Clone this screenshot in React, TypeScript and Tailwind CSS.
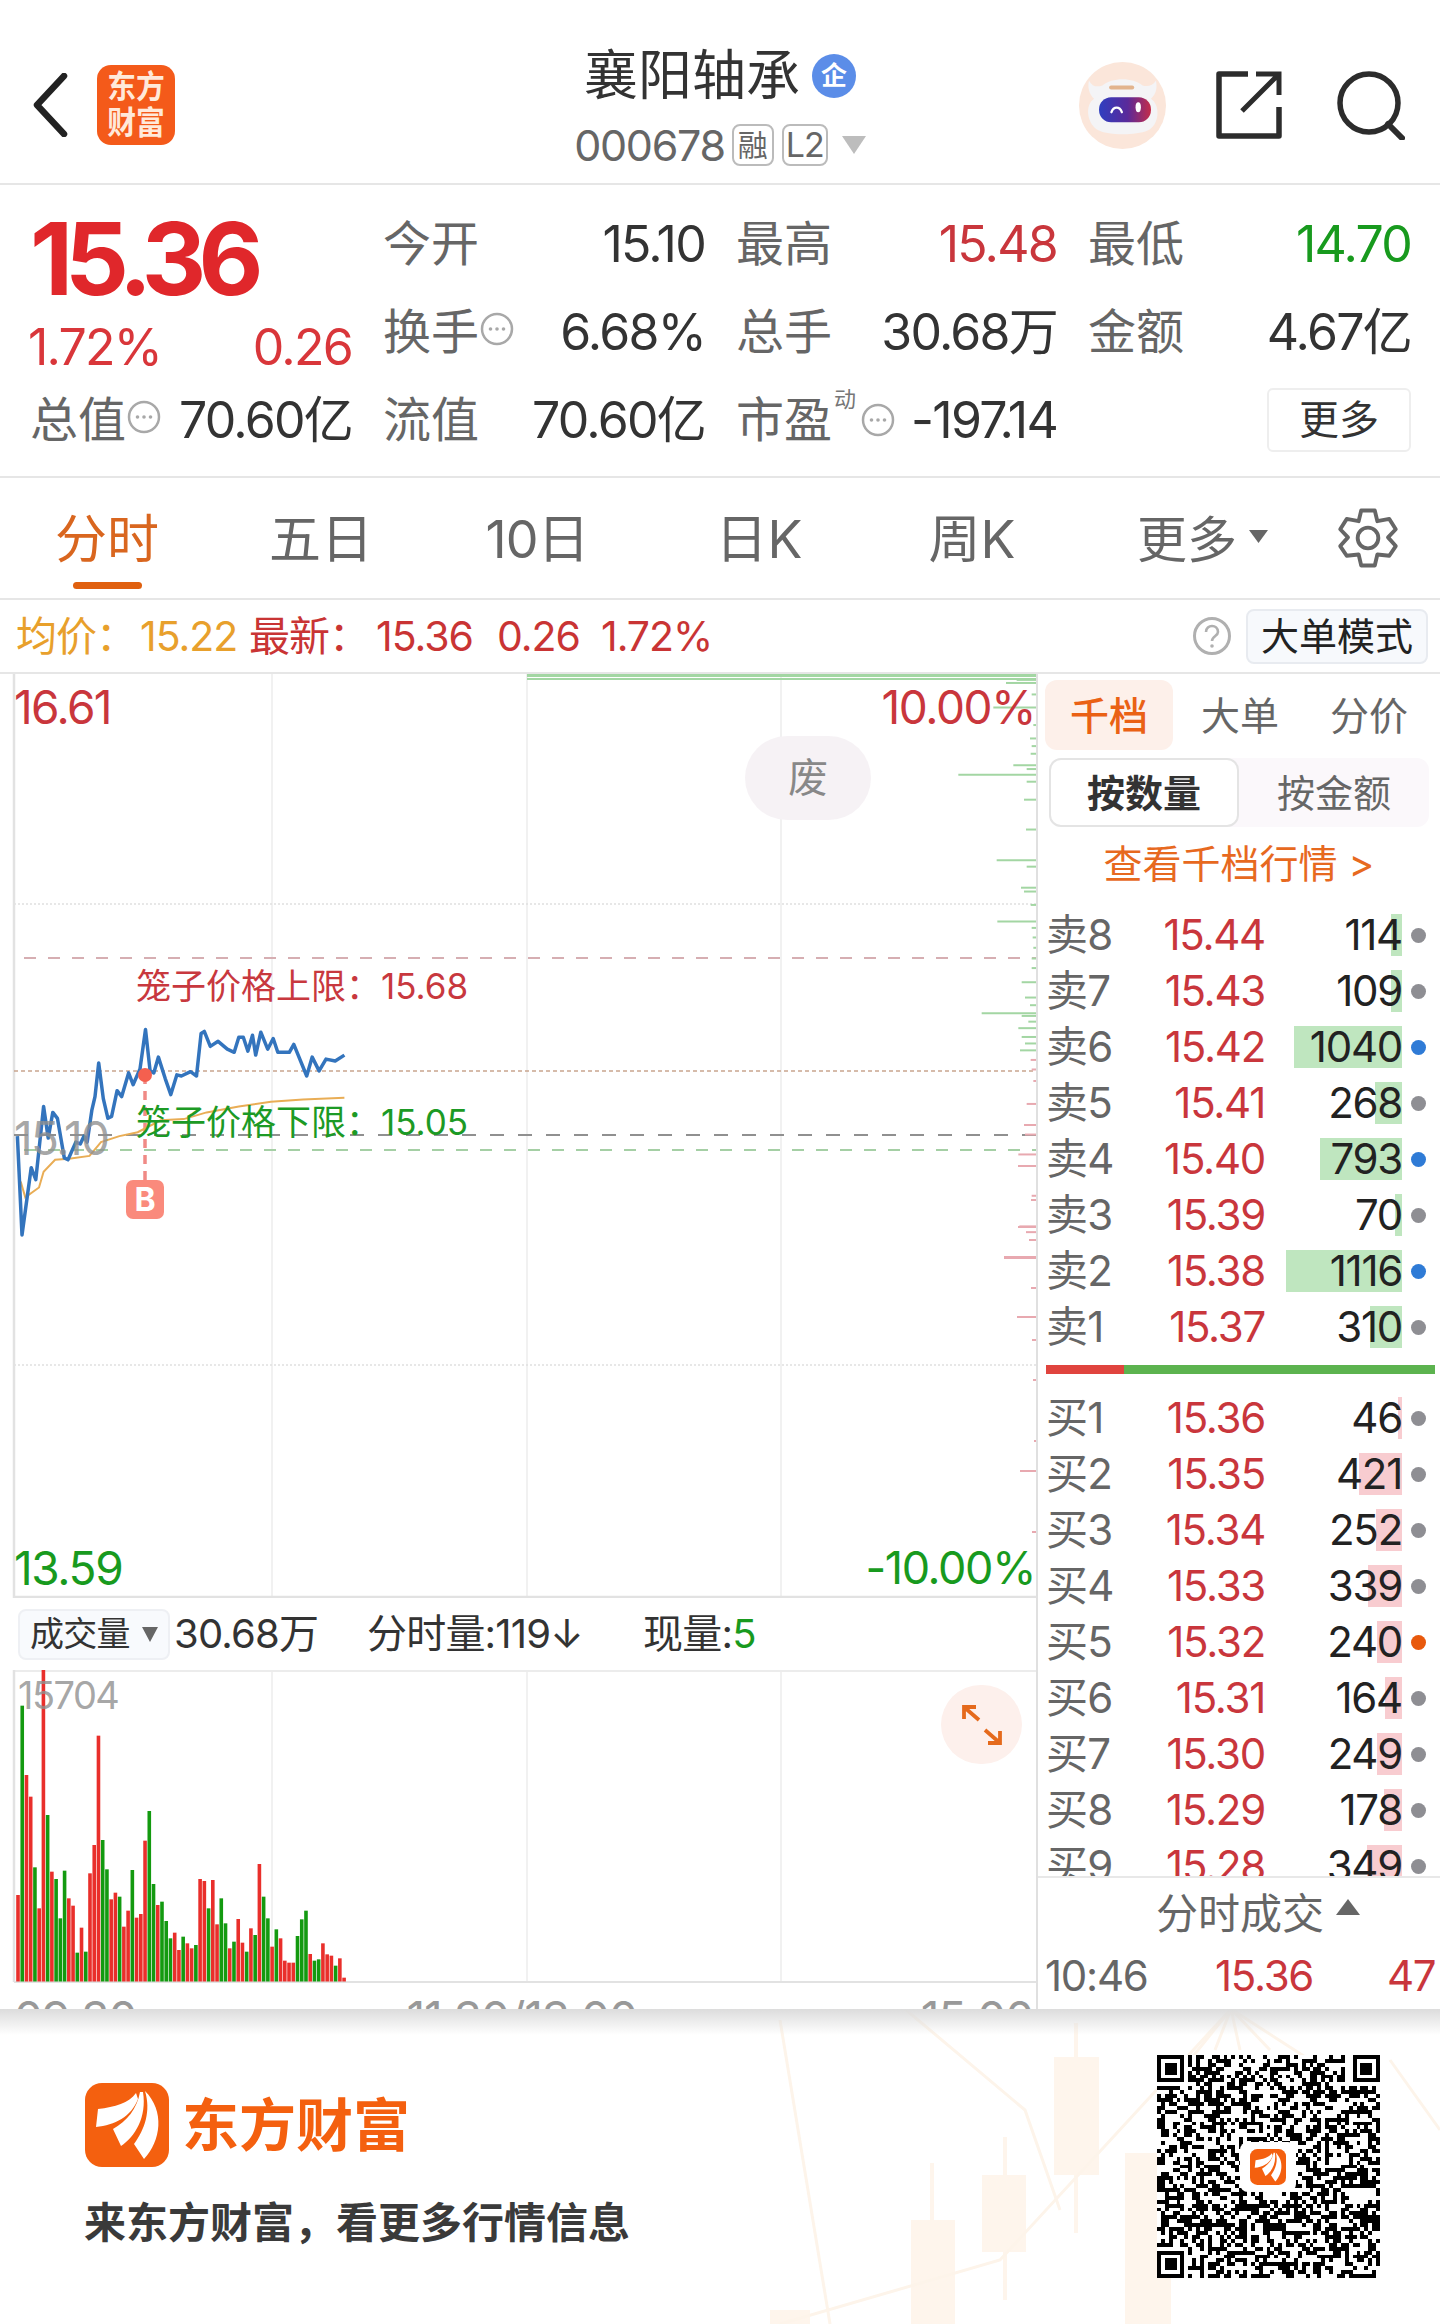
import React from "react";

const toPts = (a: number[][], sx: number, ox: number, sy: number, oy: number) =>
  a.map(([x, y]) => `${(x / sx + ox).toFixed(1)},${(y / sy + oy).toFixed(1)}`).join(" ");

const blue = [[38,395],[48,645],[68,475],[78,505],[95,320],[105,400],[115,335],[125,350],[140,450],[148,455],[165,410],[175,415],[183,395],[190,410],[200,330],[207,295],[215,210],[225,300],[235,350],[243,345],[255,280],[265,295],[280,235],[290,265],[305,225],[317,125],[327,230],[335,235],[345,195],[360,250],[372,290],[385,240],[395,243],[415,232],[428,243],[438,135],[445,130],[458,168],[475,155],[495,175],[510,183],[520,145],[530,145],[540,180],[550,140],[557,190],[568,132],[583,175],[595,148],[605,183],[630,183],[640,163],[668,243],[680,195],[695,230],[710,200],[730,205],[750,190]];
const avg = [[45,510],[55,550],[85,525],[95,485],[120,455],[150,452],[195,445],[220,410],[260,395],[300,385],[350,355],[400,352],[450,335],[520,320],[590,308],[660,302],[750,298]];

const greenDepth = [[52,350],[60,318],[90,395],[124,280],[170,400],[205,390],[225,395],[245,392],[275,340],[285,380],[300,175],[318,380],[365,372],[443,378],[523,290],[540,380],[595,363],[605,372],[640,392],[683,292],[700,395],[725,398],[752,400],[780,395],[805,395],[842,365],[882,375],[902,390],[923,245],[930,365],[945,385],[962,355],[985,365],[1002,375],[1020,360]];
const redDepth = [[1045,392],[1070,395],[1100,400],[1160,380],[1215,372],[1240,375],[1292,355],[1400,395],[1480,358],[1495,378],[1560,312]];
const redDepth2 = [[1166,19],[1227,19],[1258,33],[1288,6],[1317,20],[1380,4],[1441,3],[1471,17],[1532,5],[1340,5],[1200,6],[1240,8]];

const vol: [number, string][] = [[705,"r"],[137,"g"],[345,"r"],[410,"r"],[622,"g"],[745,"r"],[30,"r"],[465,"g"],[635,"r"],[657,"g"],[775,"g"],[632,"g"],[715,"r"],[737,"r"],[878,"g"],[803,"r"],[875,"g"],[640,"r"],[555,"r"],[227,"r"],[540,"g"],[628,"g"],[718,"r"],[698,"r"],[710,"g"],[800,"r"],[752,"r"],[630,"g"],[773,"r"],[762,"r"],[542,"r"],[453,"g"],[672,"g"],[735,"r"],[725,"g"],[783,"g"],[835,"g"],[818,"r"],[870,"r"],[830,"g"],[850,"r"],[865,"r"],[855,"g"],[657,"r"],[663,"r"],[745,"g"],[660,"r"],[793,"r"],[715,"g"],[790,"g"],[865,"r"],[845,"g"],[777,"r"],[848,"r"],[875,"g"],[805,"r"],[825,"g"],[612,"r"],[710,"g"],[775,"g"],[860,"r"],[808,"g"],[835,"r"],[902,"r"],[908,"r"],[908,"r"],[828,"g"],[778,"g"],[752,"g"],[882,"r"],[902,"g"],[898,"g"],[850,"r"],[883,"r"],[887,"r"],[917,"g"],[895,"r"],[953,"r"]];

const sells: [string, string, string, number, string][] = [
  ["卖8","15.44","114",11,"#8e8e93"],["卖7","15.43","109",11,"#8e8e93"],["卖6","15.42","1040",108,"#2f7bd6"],["卖5","15.41","268",27,"#8e8e93"],
  ["卖4","15.40","793",82,"#2f7bd6"],["卖3","15.39","70",7,"#8e8e93"],["卖2","15.38","1116",116,"#2f7bd6"],["卖1","15.37","310",32,"#8e8e93"],
];
const buys: [string, string, string, number, string][] = [
  ["买1","15.36","46",4,"#8e8e93"],["买2","15.35","421",43,"#8e8e93"],["买3","15.34","252",26,"#8e8e93"],["买4","15.33","339",34,"#8e8e93"],
  ["买5","15.32","240",25,"#e8590c"],["买6","15.31","164",17,"#8e8e93"],["买7","15.30","249",25,"#8e8e93"],["买8","15.29","178",18,"#8e8e93"],["买9","15.28","349",35,"#8e8e93"],
];

function qrPath() {
  const n = 57;
  let s = 12345;
  const rnd = () => {
    s = (s * 1103515245 + 12345) & 0x7fffffff;
    return (s >> 16) & 1;
  };
  let d = "";
  const finder = (r: number, c: number) => r < 8 && c < 8;
  for (let r = 0; r < n; r++) {
    for (let c = 0; c < n; c++) {
      const on = rnd();
      if (finder(r, c) || finder(r, n - 1 - c) || finder(n - 1 - r, c)) continue;
      if (on) d += `M${c} ${r}h1v1h-1z`;
    }
  }
  const f = (x: number, y: number) => {
    d += `M${x} ${y}h7v7h-7zM${x + 1} ${y + 1}v5h5v-5zM${x + 2} ${y + 2}h3v3h-3z`;
  };
  f(0, 0);
  f(n - 7, 0);
  f(0, n - 7);
  return d;
}
const QR = qrPath();

function DotCircle() {
  return (
    <svg width="34" height="34" viewBox="0 0 34 34" className="shrink-0">
      <circle cx="17" cy="17" r="15" fill="none" stroke="#a8a8a8" strokeWidth="2.5" />
      <circle cx="10.5" cy="17" r="1.8" fill="#a8a8a8" />
      <circle cx="17" cy="17" r="1.8" fill="#a8a8a8" />
      <circle cx="23.5" cy="17" r="1.8" fill="#a8a8a8" />
    </svg>
  );
}

function Feather({ w, h }: { w: number; h: number }) {
  return (
    <svg width={w} height={h} viewBox="0 0 84 84" className="block">
      <rect width="84" height="84" rx="17" fill="#f4600f" />
      <path d="M51 10 C44 20 30 24 13 26 L11 44 C30 42 46 34 53 16Z" fill="#fff" />
      <path d="M55 9 C52 26 42 38 28 46 L36 63 C50 54 62 34 58 9Z" fill="#fff" />
      <path d="M60 8 C66 28 60 46 49 61 L59 76 C76 58 80 28 60 8Z" fill="#fff" />
    </svg>
  );
}

function BookRow({ r, green }: { r: [string, string, string, number, string]; green: boolean }) {
  return (
    <div className="flex h-[56px] shrink-0 items-center">
      <div className="w-[80px] text-[42px] leading-none tracking-[-0.02em] text-[#666]">{r[0]}</div>
      <div className="w-[139px] text-right text-[42px] leading-none tracking-[-0.03em] text-[#c9363c]">{r[1]}</div>
      <div className="relative flex h-[42px] w-[137px] items-center justify-end">
        <div className={green ? "absolute right-0 top-0 h-full bg-[#bfe6bf]" : "absolute right-0 top-0 h-full bg-[#f8ccd0]"} style={{ width: r[3] }} />
        <span className="relative text-[42px] leading-none tracking-[-0.03em] text-[#222]">{r[2]}</span>
      </div>
      <div className="ml-[9px] h-[15px] w-[15px] rounded-full" style={{ background: r[4] }} />
    </div>
  );
}

export default function App() {
  return (
    <div className="flex h-[2324px] w-[1440px] flex-col overflow-hidden bg-white font-['Inter','Noto_Sans_CJK_SC',sans-serif] text-[#333]">
      {/* Header */}
      <div className="flex h-[183px] shrink-0 items-stretch">
        <div className="flex w-[361px] items-center pl-[32px] pt-[27px]">
          <svg width="36" height="64" viewBox="0 0 36 64">
            <path d="M32 3 L5 32 L32 61" fill="none" stroke="#222" strokeWidth="6.5" strokeLinecap="round" strokeLinejoin="round" />
          </svg>
          <div className="ml-[29px] flex h-[80px] w-[78px] flex-col items-center justify-center rounded-[14px] bg-[#f45a1a] text-[32px] font-bold leading-[36px] text-[#ffe9da]">
            <span className="scale-x-90">东方</span>
            <span className="scale-x-90">财富</span>
          </div>
        </div>
        <div className="flex flex-1 flex-col items-center pt-[46px]">
          <div className="flex h-[60px] items-center">
            <span className="text-[54px] leading-none text-[#333]">襄阳轴承</span>
            <span className="ml-[12px] flex h-[44px] w-[44px] items-center justify-center rounded-full bg-[#5b8de8] text-[26px] font-bold leading-none text-white">企</span>
          </div>
          <div className="mt-[18px] flex h-[42px] items-center">
            <span className="text-[43px] leading-none tracking-[-0.03em] text-[#666]">000678</span>
            <span className="ml-[7px] flex h-[42px] w-[42px] items-center justify-center rounded-[8px] border-2 border-[#bbb] text-[30px] leading-none text-[#666]">融</span>
            <span className="ml-[8px] flex h-[42px] w-[46px] items-center justify-center rounded-[8px] border-2 border-[#bbb] text-[34px] leading-none tracking-[-0.03em] text-[#666]">L2</span>
            <svg width="24" height="18" viewBox="0 0 24 18" className="ml-[14px]">
              <path d="M0 0H24L12 18Z" fill="#bdbdbd" />
            </svg>
          </div>
        </div>
        <div className="flex w-[361px] items-center justify-end pr-[35px] pt-[27px]">
          <svg width="87" height="87" viewBox="0 0 260 260">
            <defs>
              <linearGradient id="visor" x1="0" y1="0" x2="1" y2="0">
                <stop offset="0" stopColor="#2f3fc0" />
                <stop offset="0.55" stopColor="#5a2a9a" />
                <stop offset="1" stopColor="#c42c4a" />
              </linearGradient>
            </defs>
            <circle cx="130" cy="130" r="130" fill="#fbe6da" />
            <path d="M30 55 C40 75 55 75 70 70 C100 45 160 45 190 70 C205 75 222 70 230 55 C236 85 225 100 215 110 C245 130 240 190 205 205 C170 220 90 220 60 205 C25 190 15 130 45 110 C30 95 25 75 30 55Z" fill="#f4f4f6" />
            <rect x="90" y="70" width="75" height="12" rx="6" fill="#e2b48e" />
            <rect x="60" y="105" width="155" height="75" rx="36" fill="url(#visor)" />
            <path d="M97 150 C103 132 122 132 128 150" fill="none" stroke="#fff" strokeWidth="7" strokeLinecap="round" />
            <ellipse cx="177" cy="135" rx="8" ry="15" fill="#fff" />
          </svg>
          <svg width="66" height="68" viewBox="0 0 66 68" className="ml-[50px]">
            <path d="M32 3 H3 V65 H63 V36" fill="none" stroke="#2c2c2c" strokeWidth="5.5" strokeLinejoin="round" />
            <path d="M26 40 L62 4 M40 3 H63 V24" fill="none" stroke="#2c2c2c" strokeWidth="5" />
          </svg>
          <svg width="69" height="70" viewBox="0 0 69 70" className="ml-[54px]">
            <circle cx="33" cy="33" r="29" fill="none" stroke="#2c2c2c" strokeWidth="5.5" />
            <path d="M52 54 L66 68" stroke="#2c2c2c" strokeWidth="6" strokeLinecap="round" />
          </svg>
        </div>
      </div>

      {/* Quote */}
      <div className="grid h-[295px] shrink-0 grid-cols-[322px_322px_321px_323px] grid-rows-[88px_88px_88px] gap-x-[31px] border-y-2 border-[#e6e6e6] pl-[30px] pt-[15px]">
        <div className="row-span-2 flex flex-col">
          <div className="flex h-[114px] items-center pt-[4px] text-[100px] font-bold leading-none tracking-[-0.08em] text-[#e0272b]">15.36</div>
          <div className="mt-[6px] flex h-[54px] items-center justify-between text-[50px] leading-none tracking-[-0.035em] text-[#d9363a]">
            <span className="-ml-[2px]">1.72%</span>
            <span>0.26</span>
          </div>
        </div>
        <Cell label="今开" value="15.10" />
        <Cell label="最高" value="15.48" color="text-[#c9363c]" />
        <Cell label="最低" value="14.70" color="text-[#189a1e]" />
        <Cell label="换手" value="6.68%" icon />
        <Cell label="总手" value="30.68万" />
        <Cell label="金额" value="4.67亿" />
        <Cell label="总值" value="70.60亿" icon />
        <Cell label="流值" value="70.60亿" />
        <div className="flex items-center justify-between">
          <div className="flex items-center">
            <span className="text-[48px] leading-none text-[#666]">市盈</span>
            <span className="mb-[42px] ml-[2px] w-[22px] text-[22px] leading-none text-[#777]">动</span>
            <span className="ml-[5px]"><DotCircle /></span>
          </div>
          <span className="text-[50px] leading-none tracking-[-0.035em] text-[#333]">-197.14</span>
        </div>
        <div className="flex items-center justify-end">
          <div className="flex h-[64px] w-[144px] items-center justify-center rounded-[6px] border-2 border-[#eee] text-[40px] leading-none text-[#333]">更多</div>
        </div>
      </div>

      {/* Tabs */}
      <div className="flex h-[122px] shrink-0 items-center border-b-2 border-[#e6e6e6]">
        <div className="relative flex h-full w-[214px] items-center justify-center pt-[4px] text-[52px] leading-none text-[#d9661f]">
          分时
          <div className="absolute bottom-[9px] left-[73px] h-[7px] w-[69px] rounded-full bg-[#e0600f]" />
        </div>
        <div className="flex h-full w-[214px] items-center justify-center pt-[4px] text-[52px] leading-none text-[#666]">五日</div>
        <div className="flex h-full w-[218px] items-center justify-center pt-[4px] text-[52px] leading-none tracking-[-0.02em] text-[#666]">10日</div>
        <div className="flex h-full w-[226px] items-center justify-center pt-[4px] text-[52px] leading-none text-[#666]">日K</div>
        <div className="flex h-full w-[200px] items-center justify-center pt-[4px] text-[52px] leading-none text-[#666]">周K</div>
        <div className="ml-[65px] flex items-center pt-[4px] text-[50px] leading-none text-[#666]">
          更多
          <svg width="19" height="13" viewBox="0 0 19 13" className="mb-[8px] ml-[12px]"><path d="M0 0H19L9.5 13Z" fill="#666" /></svg>
        </div>
        <svg width="62" height="62" viewBox="50 32 192 190" className="ml-[69px]" fill="none" stroke="#666" strokeWidth="12" strokeLinejoin="round">
          <path d="M125 42 H167 L175 75 L212 68 L232 100 L208 125 L232 152 L212 182 L175 178 L167 212 H125 L117 178 L80 182 L60 152 L84 125 L60 100 L80 68 L117 75 Z" />
          <circle cx="146" cy="127" r="32" />
        </svg>
      </div>

      {/* Info bar */}
      <div className="flex h-[74px] shrink-0 items-center justify-between border-b-2 border-[#e6e6e6] pl-[16px] pr-[12px] text-[41px] leading-none tracking-[-0.025em]">
        <div className="flex items-center">
          <span className="w-[124px] text-[#e8a02c]">均价：</span>
          <span className="w-[109px] text-[#e8a02c]">15.22</span>
          <span className="w-[127px] text-[#c93434]">最新：</span>
          <span className="w-[121px] text-[#c93434]">15.36</span>
          <span className="w-[104px] text-[#c93434]">0.26</span>
          <span className="text-[#c93434]">1.72%</span>
        </div>
        <div className="flex items-center">
          <svg width="40" height="40" viewBox="0 0 40 40" className="block">
            <circle cx="20" cy="20" r="17.5" fill="none" stroke="#b0b0b0" strokeWidth="3" />
            <path d="M14 16 C14 8 26 8 26 16 C26 20 20 20 20 25" fill="none" stroke="#b0b0b0" strokeWidth="2.6" />
            <circle cx="20" cy="30" r="1.8" fill="#b0b0b0" />
          </svg>
          <div className="ml-[14px] flex h-[55px] w-[182px] items-center justify-center rounded-[8px] border-2 border-[#e8ebf0] bg-[#f7f9fc] text-[38px] tracking-normal text-[#222]">大单模式</div>
        </div>
      </div>

      {/* Main */}
      <div className="flex h-[1335px] shrink-0">
        <div className="flex h-full w-[1038px] shrink-0 flex-col border-r-2 border-[#e0e0e0]">
          <div className="relative h-[924px] shrink-0">
            <svg className="absolute inset-0" width="1036" height="924" viewBox="0 674 1036 924">
              <g stroke="#ededed" strokeWidth="1.5">
                <line x1="272" y1="674" x2="272" y2="1596" />
                <line x1="527" y1="674" x2="527" y2="1596" />
                <line x1="781" y1="674" x2="781" y2="1596" />
              </g>
              <g stroke="#e0e0e0" strokeWidth="1.5" strokeDasharray="2 2">
                <line x1="14" y1="904" x2="1036" y2="904" />
                <line x1="14" y1="1365" x2="1036" y2="1365" />
              </g>
              <line x1="14" y1="672" x2="14" y2="1598" stroke="#e2e2e2" strokeWidth="2.5" />
              <line x1="14" y1="1597" x2="1036" y2="1597" stroke="#e2e2e2" strokeWidth="2.5" />
              <line x1="24" y1="958" x2="1036" y2="958" stroke="#d6aeb2" strokeWidth="2" strokeDasharray="12 12" />
              <line x1="14" y1="1071" x2="1036" y2="1071" stroke="#c9a58f" strokeWidth="1.5" strokeDasharray="4 3" />
              <line x1="14" y1="1135" x2="1036" y2="1135" stroke="#909090" strokeWidth="2" strokeDasharray="14 14" />
              <line x1="24" y1="1150" x2="1036" y2="1150" stroke="#a5cfa5" strokeWidth="2" strokeDasharray="12 12" />
              <g stroke="#a3d6a3" strokeWidth="2">
                <line x1="527" y1="675" x2="1036" y2="675" strokeWidth="4" />
                <line x1="527" y1="679" x2="1036" y2="679" />
                {greenDepth.map(([y, x], i) => (
                  <line key={i} x1={900 + x / 3} y1={660 + y / 2.613} x2="1036" y2={660 + y / 2.613} />
                ))}
              </g>
              <g stroke="#e8a9b0" strokeWidth="2">
                {redDepth.map(([y, x], i) => (
                  <line key={i} x1={900 + x / 3} y1={660 + y / 2.613} x2="1036" y2={660 + y / 2.613} />
                ))}
                {redDepth2.map(([y, w], i) => (
                  <line key={i} x1={1037 - w} y1={y} x2="1036" y2={y} />
                ))}
              </g>
              <line x1="145" y1="1075" x2="145" y2="1180" stroke="#f08a86" strokeWidth="3.5" strokeDasharray="9 7" />
              <polyline points={toPts(avg, 2.178, 0, 2.53, 980)} fill="none" stroke="#e9ad55" strokeWidth="2" />
              <polyline points={toPts(blue, 2.178, 0, 2.53, 980)} fill="none" stroke="#3374bd" strokeWidth="3.5" strokeLinejoin="round" />
              <circle cx="145" cy="1075" r="7" fill="#f4604f" />
            </svg>
            <span className="absolute left-[14px] top-[12px] text-[46px] leading-[42px] tracking-[-0.035em] text-[#c9363c]">16.61</span>
            <span className="absolute right-[1px] top-[12px] text-[46px] leading-[42px] tracking-[-0.03em] text-[#c9363c]">10.00%</span>
            <div className="absolute left-[745px] top-[62px] flex h-[84px] w-[126px] items-center justify-center rounded-full bg-[#f5f1f4]/95 text-[40px] leading-none text-[#888]">废</div>
            <span className="absolute left-[136px] top-[294px] text-[35px] leading-[36px] text-[#c8383e]">笼子价格上限：15.68</span>
            <span className="absolute left-[136px] top-[430px] text-[35px] leading-[36px] text-[#1c9a25]">笼子价格下限：15.05</span>
            <span className="absolute left-[14px] top-[443px] text-[46px] leading-[42px] tracking-[-0.035em] text-[#8f8f8f]/80">15.10</span>
            <div className="absolute left-[126px] top-[506px] flex h-[39px] w-[38px] items-center justify-center rounded-[7px] bg-[#fa8a7c] text-[32px] font-bold leading-none text-white">B</div>
            <span className="absolute left-[14px] top-[873px] text-[46px] leading-[42px] tracking-[-0.03em] text-[#189a1e]">13.59</span>
            <span className="absolute right-[1px] top-[873px] text-[45px] leading-[42px] tracking-[-0.03em] text-[#189a1e]">-10.00%</span>
          </div>
          <div className="flex h-[72px] shrink-0 items-center pl-[18px] text-[40px] leading-none tracking-[-0.02em] text-[#333]">
            <div className="flex h-[51px] w-[152px] items-center rounded-[8px] border-2 border-[#eef0f4] bg-[#f8fafd] pl-[10px] text-[34px] leading-none">
              成交量
              <svg width="16" height="15" viewBox="0 0 16 15" className="ml-[12px]"><path d="M0 0H16L8 15Z" fill="#666" /></svg>
            </div>
            <span className="ml-[4px] w-[193px]">30.68万</span>
            <span className="w-[216px]">分时量:119↓</span>
            <span className="ml-[60px]">现量:</span>
            <span className="text-[#189a1e]">5</span>
          </div>
          <div className="relative h-[313px] shrink-0">
            <svg className="absolute inset-0" width="1036" height="313" viewBox="0 1670 1036 313">
              <g stroke="#ededed" strokeWidth="1.5">
                <line x1="272" y1="1670" x2="272" y2="1982" />
                <line x1="527" y1="1670" x2="527" y2="1982" />
                <line x1="781" y1="1670" x2="781" y2="1982" />
              </g>
              <line x1="14" y1="1671" x2="1036" y2="1671" stroke="#ececec" strokeWidth="2" />
              <line x1="14" y1="1670" x2="14" y2="1982" stroke="#e2e2e2" strokeWidth="2.5" />
              <line x1="14" y1="1982" x2="1036" y2="1982" stroke="#e2e2e2" strokeWidth="2" />
              {vol.map(([t, c], i) => {
                const y = 1660 + t / 3;
                return <rect key={i} x={16.2 + i * 4.235} y={y} width="3.6" height={1981.5 - y} fill={c === "r" ? "#e92f2b" : "#139a10"} />;
              })}
            </svg>
            <span className="absolute left-[18px] top-[6px] text-[38px] leading-[38px] tracking-[-0.04em] text-[#8f8f8f]/80">15704</span>
            <div className="absolute left-[941px] top-[15px] flex h-[79px] w-[81px] items-center justify-center rounded-full bg-[#fdf0ec]">
              <svg width="40" height="40" viewBox="0 0 40 40" fill="none" stroke="#e56a1c" strokeWidth="3.8">
                <path d="M2 14 V2 H14 M2 2 L17 15" />
                <path d="M38 26 V38 H26 M38 38 L23 25" />
              </svg>
            </div>
          </div>
          <div className="relative flex h-[26px] shrink-0 justify-between overflow-hidden pl-[14px] pr-[3px] pt-[12px] text-[46px] leading-[46px] tracking-[-0.025em] text-[#999]">
            <span>09:30</span>
            <span className="ml-[-14px]">11:30/13:00</span>
            <span>15:00</span>
          </div>
        </div>

        <div className="flex h-full flex-1 flex-col">
          <div className="flex h-[76px] shrink-0 items-center pl-[7px] pt-[6px] text-[39px] leading-none text-[#666]">
            <div className="flex h-[70px] w-[128px] items-center justify-center rounded-[12px] bg-[#fdf0ea] font-medium text-[#ea6114]">千档</div>
            <div className="flex w-[134px] justify-center">大单</div>
            <div className="flex w-[124px] justify-center">分价</div>
          </div>
          <div className="ml-[11px] mt-[8px] flex h-[69px] w-[380px] shrink-0 items-center rounded-[12px] bg-[#fbf8fb] text-[38px] leading-none">
            <div className="flex h-[69px] w-[190px] items-center justify-center rounded-[12px] border-2 border-[#e4e4e4] bg-white font-bold text-[#333]">按数量</div>
            <div className="flex flex-1 justify-center text-[#666]">按金额</div>
          </div>
          <div className="flex h-[72px] shrink-0 items-center justify-center text-[39px] leading-none text-[#e7691f]">查看千档行情 &gt;</div>
          <div className="shrink-0 pl-[8px] pt-[8px]">
            {sells.map((r) => <BookRow key={r[0]} r={r} green />)}
          </div>
          <div className="relative ml-[8px] mt-[10px] h-[9px] w-[389px] shrink-0 bg-[#5cb34f]">
            <div className="h-full w-[78px] bg-[#e0443e]" />
          </div>
          <div className="h-[502px] shrink-0 overflow-hidden pl-[8px] pt-[16px]">
            {buys.map((r) => <BookRow key={r[0]} r={r} green={false} />)}
          </div>
          <div className="flex h-[74px] shrink-0 items-center justify-center border-t-2 border-[#e8e8e8] pl-[38px] text-[42px] leading-none text-[#666]">
            分时成交
            <svg width="24" height="16" viewBox="0 0 24 16" className="mb-[14px] ml-[12px]"><path d="M0 16H24L12 0Z" fill="#666" /></svg>
          </div>
          <div className="flex h-[52px] shrink-0 items-center pl-[7px] text-[42px] leading-none tracking-[-0.03em] text-[#c9363c]">
            <span className="w-[170px] text-[#666]">10:46</span>
            <span className="w-[172px]">15.36</span>
            <span>47</span>
          </div>
        </div>
      </div>

      {/* Banner */}
      <div className="relative flex flex-1 overflow-hidden bg-white">
        <svg className="absolute inset-0" width="1440" height="315" viewBox="0 2009 1440 315">
          <g fill="#fef5ec">
            <rect x="1054" y="2057" width="45" height="118" />
            <rect x="1074" y="2023" width="4" height="210" />
            <rect x="982" y="2175" width="44" height="77" />
            <rect x="1003" y="2137" width="4" height="163" />
            <rect x="911" y="2220" width="44" height="104" />
            <rect x="930" y="2163" width="4" height="161" />
            <rect x="1125" y="2153" width="46" height="171" />
            <rect x="770" y="2310" width="40" height="14" />
          </g>
          <g stroke="#fdf4ea" strokeWidth="3" fill="none">
            <path d="M905 2009 L1025 2110 L1060 2210" />
            <path d="M1231 2009 L1000 2260 L780 2324" />
            <path d="M1231 2009 L1190 2060 M1231 2009 L1215 2050 M1231 2009 L1240 2050 M1231 2009 L1270 2050 M1231 2009 L1310 2060" />
            <path d="M1390 2060 L1440 2130" />
            <path d="M780 2020 L830 2324" />
          </g>
        </svg>
        <div className="absolute inset-x-0 top-0 h-[26px] bg-gradient-to-b from-[#dcdcdc] to-transparent" />
        <div className="relative flex w-[1157px] shrink-0 flex-col pl-[84px] pt-[74px]">
          <div className="flex items-center">
            <Feather w={86} h={84} />
            <span className="ml-[12px] text-[57px] font-bold leading-none text-[#f4600f]">东方财富</span>
          </div>
          <div className="mt-[31px] text-[42px] font-bold leading-[50px] text-[#3a3a3a]">来东方财富，看更多行情信息</div>
        </div>
        <div className="relative mt-[46px] h-[223px] w-[223px] shrink-0">
          <svg width="223" height="223" viewBox="0 0 57 57" shapeRendering="crispEdges">
            <rect width="57" height="57" fill="#fff" />
            <path d={QR} fill="#000" fillRule="evenodd" />
          </svg>
          <div className="absolute left-[83px] top-[87px] flex h-[50px] w-[56px] items-center justify-center rounded-[8px] bg-white">
            <Feather w={36} h={38} />
          </div>
        </div>
      </div>
    </div>
  );
}

function Cell({ label, value, color = "text-[#333]", icon }: { label: string; value: string; color?: string; icon?: boolean }) {
  return (
    <div className="flex items-center justify-between">
      <div className="flex items-center">
        <span className="text-[48px] leading-none text-[#666]">{label}</span>
        {icon ? <span className="mb-[6px] ml-[1px]"><DotCircle /></span> : null}
      </div>
      <span className={`text-[50px] leading-none tracking-[-0.035em] ${color}`}>{value}</span>
    </div>
  );
}
